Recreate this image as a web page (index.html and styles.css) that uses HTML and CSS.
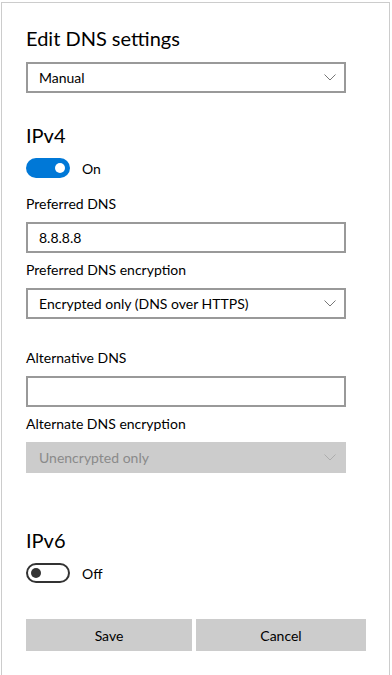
FILE: index.html
```html
<!DOCTYPE html>
<html lang="en">
<head>
<meta charset="utf-8">
<title>Edit DNS settings</title>
<link rel="stylesheet" href="styles.css">
</head>
<body>
<div class="dialog">
	<h1 class="title">Edit DNS settings</h1>
	<div class="select first">
		<span>Manual</span>
		<svg class="chevron" width="12" height="7" viewBox="0 0 12 7"><path d="M0.5 0.5 L6 6 L11.5 0.5" fill="none" stroke="#777" stroke-width="1"/></svg>
	</div>

	<h2 class="section">IPv4</h2>
	<div class="switch-row">
		<span class="switch on"><i></i></span>
		<span>On</span>
	</div>

	<p class="label first-label">Preferred DNS</p>
	<div class="input">8.8.8.8</div>
	<p class="label">Preferred DNS encryption</p>
	<div class="select">
		<span>Encrypted only (DNS over HTTPS)</span>
		<svg class="chevron" width="12" height="7" viewBox="0 0 12 7"><path d="M0.5 0.5 L6 6 L11.5 0.5" fill="none" stroke="#777" stroke-width="1"/></svg>
	</div>

	<p class="label gap-label">Alternative DNS</p>
	<div class="input"></div>
	<p class="label">Alternate DNS encryption</p>
	<div class="select disabled">
		<span>Unencrypted only</span>
		<svg class="chevron" width="12" height="7" viewBox="0 0 12 7"><path d="M0.5 0.5 L6 6 L11.5 0.5" fill="none" stroke="#adadad" stroke-width="1"/></svg>
	</div>

	<h2 class="section v6">IPv6</h2>
	<div class="switch-row">
		<span class="switch off"><i></i></span>
		<span>Off</span>
	</div>

	<div class="buttons">
		<button class="btn save">Save</button>
		<button class="btn cancel">Cancel</button>
	</div>
</div>
</body>
</html>
```

FILE: styles.css
```css
*{margin:0; padding:0; box-sizing:border-box;}
body{background:#fff; font-family:"Lato","Open Sans","Liberation Sans",sans-serif; color:#000; overflow:hidden;}

.dialog{width:389px; height:680px; margin:2px 0 0 1px; border:1px solid #cccccc; border-bottom:none; padding:21px 0 0 24px;}

.title, .section{font-size:20px; font-weight:normal; line-height:28px;}
.section{margin-top:28px;}
.section.v6{margin-top:53px;}

.label{font-size:14px; line-height:20px; margin-top:7px;}
.first-label{margin-top:16px;}
.gap-label{margin-top:29px;}

.select, .input{width:320px; height:31px; border:2px solid #999; margin-top:8px; font-size:14px; display:flex; align-items:center; padding:0 0 0 11px;}
.select.first{margin-top:10px;}
.select span{flex:1;}
.chevron{margin-right:8px;}
.select.disabled{background:#ccc; border-color:#ccc; color:#8a8a8a;}

.switch-row{display:flex; align-items:center; margin-top:9px; height:20px; font-size:14px;}
.switch{width:44px; height:20px; border-radius:10px; margin-right:12px; position:relative; display:block;}
.switch i{position:absolute; width:10px; height:10px; border-radius:50%; top:5px;}
.switch.on{background:#0078d7;}
.switch.on i{background:#fff; right:5px;}
.switch.off{border:2px solid #333;}
.switch.off i{background:#333; left:3px; top:3px;}

.buttons{display:flex; gap:4px; margin-top:36px;}
.btn{height:32px; border:none; background:#ccc; font-family:inherit; font-size:14px; color:#000;}
.save{width:166px;}
.cancel{width:170px;}
```
